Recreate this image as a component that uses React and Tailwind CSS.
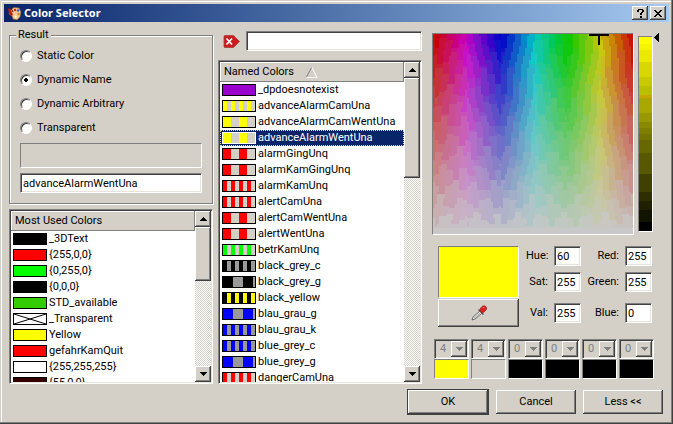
import React, { useState } from 'react';

const GREY = '#d4d0c8';

const mostUsed = [
  { name: '_3DText', colors: ['#000000'] },
  { name: '{255,0,0}', colors: ['#ff0000'] },
  { name: '{0,255,0}', colors: ['#00ff00'] },
  { name: '{0,0,0}', colors: ['#000000'] },
  { name: 'STD_available', colors: ['#33cc00'] },
  { name: '_Transparent', transparent: true, colors: ['#ffffff'] },
  { name: 'Yellow', colors: ['#ffff00'] },
  { name: 'gefahrKamQuit', colors: ['#ff0000'] },
  { name: '{255,255,255}', colors: ['#ffffff'] },
  { name: '{55,0,0}', colors: ['#370000'] }
];

const namedColors = [
  { name: '_dpdoesnotexist', colors: ['#9900cc'] },
  { name: 'advanceAlarmCamUna', colors: ['#ffff00', GREY], stripe: 4 },
  { name: 'advanceAlarmCamWentUna', colors: ['#ffff00', GREY], stripe: 8 },
  { name: 'advanceAlarmWentUna', colors: ['#ffff00', GREY], stripe: 8 },
  { name: 'alarmGingUnq', colors: ['#ff0000', GREY], stripe: 8 },
  { name: 'alarmKamGingUnq', colors: ['#ff0000', GREY], stripe: 8 },
  { name: 'alarmKamUnq', colors: ['#ff0000', GREY], stripe: 4 },
  { name: 'alertCamUna', colors: ['#ff0000', GREY], stripe: 4 },
  { name: 'alertCamWentUna', colors: ['#ff0000', GREY], stripe: 8 },
  { name: 'alertWentUna', colors: ['#ff0000', GREY], stripe: 8 },
  { name: 'betrKamUnq', colors: ['#00ff00', GREY], stripe: 4 },
  { name: 'black_grey_c', colors: ['#000000', '#999999'], stripe: 4 },
  { name: 'black_grey_g', colors: ['#000000', '#999999'], stripe: 10 },
  { name: 'black_yellow', colors: ['#000000', '#ffff00'], stripe: 4 },
  { name: 'blau_grau_g', colors: ['#0000ff', '#999999'], stripe: 10 },
  { name: 'blau_grau_k', colors: ['#0000ff', '#999999'], stripe: 4 },
  { name: 'blue_grey_c', colors: ['#0000ff', '#999999'], stripe: 4 },
  { name: 'blue_grey_g', colors: ['#0000ff', '#999999'], stripe: 10 },
  { name: 'dangerCamUna', colors: ['#ff0000', GREY], stripe: 4 }
];

// [color, share of the bar]
const valueSteps = [
  ['#ffff00', 7], ['#f5f500', 6], ['#eaea00', 12], ['#d8d800', 15], ['#c9c900', 9],
  ['#b9c000', 9], ['#c8a800', 3], ['#a8a800', 15], ['#989800', 9], ['#8a8a00', 6],
  ['#7e7e00', 6], ['#747400', 6], ['#686800', 13], ['#585800', 21], ['#404000', 18],
  ['#2e2e00', 9], ['#202000', 9], ['#101400', 12], ['#000000', 9]
];

const resultTypes = ['Static Color', 'Dynamic Name', 'Dynamic Arbitrary', 'Transparent'];

const combos = [
  { value: '4', swatch: 'bg-[#ffff00]' },
  { value: '4', swatch: 'bg-[#d4d0c8]' },
  { value: '0', swatch: 'bg-black' },
  { value: '0', swatch: 'bg-black' },
  { value: '0', swatch: 'bg-black' },
  { value: '0', swatch: 'bg-black' }
];

const channels = [
  ['Hue', '60'], ['Red', '255'],
  ['Sat', '255'], ['Green', '255'],
  ['Val', '255'], ['Blue', '0']
];

const raised = 'bg-[#d4d0c8] shadow-[inset_-1px_-1px_#404040,inset_1px_1px_#ffffff,inset_-2px_-2px_#808080]';
const sunken = 'border border-t-[#808080] border-l-[#808080] border-b-white border-r-white shadow-[inset_1px_1px_#404040,inset_-1px_-1px_#e8e4dc]';
const etched = 'border border-t-[#808080] border-l-[#808080] border-b-white border-r-white';

// Hue runs right to left, saturation drops towards the bottom, value stays at 200.
// Colors are snapped to bands that narrow towards red, green and blue.
function spectrumColor(x, y) {
  const hue = 6 - (x / 200) * 6;
  const primary = Math.round(hue / 2) * 2;
  const side = hue < primary ? -1 : 1;
  const t = y / 200;
  const wobble = 0.03 * Math.sin(y * 0.11 + primary);
  const band = Math.floor((Math.abs(hue - primary) + t * 0.9 + wobble) / 0.2);
  const shift = ((band * 5 + primary * 3 + side + 7) % 7) / 40;
  const fade = (Math.floor((t + shift) / 0.17) + 0.5) * 0.17 - shift;
  const bleach = Math.max(0, Math.min((fade + t) / 2, 1));
  const snappedBleach = Math.round(bleach / 0.08) * 0.08;
  const f = Math.max(0, Math.min((band + 0.4) * 0.2 - snappedBleach * 0.9, 1));
  const sat = y > 192 ? 0 : 1 - snappedBleach;
  const snapped = primary + side * f + 6;
  const rgb = [5, 3, 1].map((n) => {
    const k = (n + snapped) % 6;
    return Math.round(200 * (1 - sat * Math.max(0, Math.min(k, 4 - k, 1))));
  });
  return `rgb(${rgb.join(',')})`;
}

function spectrumCells() {
  const cells = [];
  for (let x = 0; x < 200; x += 2) {
    let start = 0;
    let last = null;
    for (let y = 0; y <= 200; y += 2) {
      const fill = y === 200 ? null : spectrumColor(x, y);
      if (fill !== last) {
        if (last) cells.push({ x, y: start, h: y - start, fill: last });
        start = y;
        last = fill;
      }
    }
  }
  return cells;
}

const cells = spectrumCells();

function Spectrum() {
  return (
    <svg width="200" height="200" viewBox="0 0 200 200" shapeRendering="crispEdges">
      {cells.map((c) => (
        <rect key={`${c.x}-${c.y}`} x={c.x} y={c.y} width="2" height={c.h} fill={c.fill} />
      ))}
      <path d="M156 0h20v2h-9v9h-2v-9h-9z" fill="#000" />
    </svg>
  );
}

function Swatch({ item, selected }) {
  const [a, b] = item.colors;
  const size = item.stripe;
  const background = b
    ? `repeating-linear-gradient(90deg, ${a} 0 ${size}px, ${b} ${size}px ${size * 2}px)`
    : a;
  return (
    <span className={`block h-3 w-[34px] shrink-0 border ${selected ? 'border-white' : 'border-black'}`}>
      <span className="block h-full" style={{ background }}>
        {item.transparent && (
          <svg width="32" height="10" viewBox="0 0 32 10" className="block">
            <path d="M0 0l32 10M32 0L0 10" stroke="#000" strokeWidth="1" />
          </svg>
        )}
      </span>
    </span>
  );
}

function Arrow({ up, color = '#000' }) {
  return (
    <svg width="7" height="4" viewBox="0 0 7 4" shapeRendering="crispEdges">
      <path d={up ? 'M3 0h1v1h1v1h1v1h1v1H0V3h1V2h1V1h1z' : 'M0 0h7v1H6v1H5v1H4v1H3V3H2V2H1V1H0z'} fill={color} />
    </svg>
  );
}

function ScrollBar({ thumb }) {
  return (
    <div className="flex w-4 shrink-0 flex-col bg-[conic-gradient(#ffffff_25%,#d4d0c8_0_50%,#ffffff_0_75%,#d4d0c8_0)] bg-[length:2px_2px]">
      <button aria-label="Scroll up" className={`flex h-4 shrink-0 items-center justify-center ${raised}`}><Arrow up /></button>
      <div className={`${thumb} shrink-0 ${raised}`} />
      <button aria-label="Scroll down" className={`mt-auto flex h-4 shrink-0 items-center justify-center ${raised}`}><Arrow /></button>
    </div>
  );
}

function ColorList({ title, items, sorted, selected, onSelect, thumb }) {
  return (
    <div className={`flex min-h-0 flex-1 bg-white p-px ${sunken}`}>
      <div className="min-w-0 flex-1 overflow-hidden">
        <table className="w-full table-fixed border-collapse">
          <thead>
            <tr>
              <th className="h-5 bg-[#d4d0c8] p-0 text-left font-normal shadow-[inset_-1px_-1px_#808080,inset_1px_1px_#ffffff]">
                <div className="flex items-center gap-3 pl-1">
                  {title}
                  {sorted && (
                    <svg width="12" height="11" viewBox="0 0 12 11">
                      <path d="M5.500 .5L.5 10" stroke="#808080" fill="none" />
                      <path d="M6 .5L11 10.500H.5" stroke="#fff" fill="none" />
                    </svg>
                  )}
                </div>
              </th>
            </tr>
          </thead>
          <tbody>
            {items.map((item) => {
              const active = item.name === selected;
              return (
                <tr key={item.name} onClick={() => onSelect && onSelect(item.name)}>
                  <td className={`h-4 p-0 ${active ? 'bg-[#0a246a] text-white outline-1 -outline-offset-1 outline-dotted outline-[#f5db95]' : ''}`}>
                    <div className="flex h-4 items-center gap-0.5 pl-0.5 leading-4">
                      <Swatch item={item} selected={active} />
                      <span>{item.name}</span>
                    </div>
                  </td>
                </tr>
              );
            })}
          </tbody>
        </table>
      </div>
      <ScrollBar thumb={thumb} />
    </div>
  );
}

function TitleBar() {
  return (
    <header className="flex h-[18px] shrink-0 items-center bg-linear-to-r from-[#0a246a] to-[#a6caf0] pr-[3px] pl-1">
      <svg width="13" height="13" viewBox="0 0 13 13">
        <path d="M2 3L6 .5l5 .5 2 4-1 5-3 3-4-1-1-3-3-2z" fill="#f0c890" stroke="#8a5a30" strokeWidth=".7" />
        <path d="M0 1l3 2 2 5-2 1-2-3z" fill="#c02018" />
        <path d="M3 1l2 4" stroke="#401008" />
        <circle cx="7" cy="3" r="1.200" fill="#d82018" />
        <circle cx="10" cy="3.500" r="1.200" fill="#3060c8" />
        <circle cx="10.500" cy="7" r="1.200" fill="#c88020" />
        <circle cx="7.500" cy="9.500" r="1.200" fill="#fff4d8" />
      </svg>
      <h1 className="ml-[3px] flex-1 font-['Noto_Sans',sans-serif] text-[11px] leading-4 font-bold text-white">Color Selector</h1>
      <div className="flex gap-0.5">
        <button aria-label="Help" className={`flex h-3.5 w-4 items-center justify-center ${raised}`}>
          <svg width="7" height="9" viewBox="0 0 7 9" shapeRendering="crispEdges">
            <path d="M1 0h5v1H1zM0 1h2v2H0zM5 1h2v2H5zM4 3h2v1H4zM3 4h2v2H3zM3 7h2v2H3z" />
          </svg>
        </button>
        <button aria-label="Close" className={`flex h-3.5 w-4 items-center justify-center ${raised}`}>
          <svg width="8" height="7" viewBox="0 0 8 7" shapeRendering="crispEdges">
            <path d="M0 0h2v1H0zM6 0h2v1H6zM1 1h2v1H1zM5 1h2v1H5zM2 2h4v1H2zM3 3h2v1H3zM2 4h4v1H2zM1 5h2v1H1zM5 5h2v1H5zM0 6h2v1H0zM6 6h2v1H6z" />
          </svg>
        </button>
      </div>
    </header>
  );
}

function ResultGroup({ type, onType, name, onName }) {
  return (
    <fieldset className="border border-[#808080] px-2.5 pb-2.5 shadow-[1px_1px_#ffffff,inset_1px_1px_#ffffff]">
      <legend className="-ml-1 bg-[#d4d0c8] px-0.5 leading-[14px]">Result</legend>
      <div className="flex flex-col pt-0.5">
        {resultTypes.map((label) => (
          <label key={label} className="flex h-6 items-center gap-[5px]">
            <input
              type="radio"
              name="result"
              checked={type === label}
              onChange={() => onType(label)}
              className="size-3 appearance-none rounded-full border border-t-[#808080] border-r-white border-b-white border-l-[#808080] bg-white shadow-[inset_1px_1px_#404040] checked:bg-[radial-gradient(circle,#000_2px,#fff_2px)]"
            />
            {label}
          </label>
        ))}
      </div>
      <div className={`mt-[3px] h-[25px] ${etched}`} />
      <input
        aria-label="Color name"
        value={name}
        onChange={(e) => onName(e.target.value)}
        className={`mt-[5px] block h-5 w-full bg-white px-0.5 ${sunken}`}
      />
    </fieldset>
  );
}

function ColorPanel() {
  return (
    <section className="flex shrink-0 flex-col pt-[11px]">
      <div className="flex gap-1">
        <div className={`h-[202px] w-[202px] ${etched}`}><Spectrum /></div>
        <div className="flex gap-px">
          <div className={`mt-[3px] flex h-[196px] w-[15px] flex-col ${etched}`}>
            {valueSteps.map(([color, size]) => (
              <div key={color} style={{ background: color, flexGrow: size }} />
            ))}
          </div>
          <svg width="5" height="9" viewBox="0 0 5 9" shapeRendering="crispEdges">
            <path d="M4 0h1v9H4V8H3V7H2V6H1V5H0V4h1V3h1V2h1V1h1z" />
          </svg>
        </div>
      </div>

      <div className="mt-[11px] flex gap-[7px] pl-1.5">
        <div className="flex w-[81px] flex-col gap-px">
          <div className={`h-[52px] bg-[#ffff00] ${etched}`} />
          <button aria-label="Pick color" className={`flex h-7 items-center justify-center ${raised}`}>
            <svg width="16" height="16" viewBox="0 0 16 16">
              <path d="M1 15l1-3 7-6 2 2-7 6z" fill="#f4f4f4" stroke="#666" strokeWidth="1" />
              <path d="M3 13l6-5" stroke="#aaa" />
              <path d="M7.500 4.500l5 5" stroke="#555" strokeWidth="1.500" />
              <path d="M9 5c0-2 3-5 5-4s2 3 1 4-3 3-4 3z" fill="#e02020" stroke="#901010" strokeWidth=".6" />
              <path d="M12 3l1.500-1" stroke="#ff9090" />
            </svg>
          </button>
        </div>
        <div className="grid grid-cols-[28px_27px_44px_27px] grid-rows-[26px_31px_20px] items-start">
          {channels.map(([label, value]) => (
            <React.Fragment key={label}>
              <label htmlFor={label} className="pr-1.5 text-right leading-5">{label}:</label>
              <input id={label} defaultValue={value} className={`h-5 w-[27px] bg-white px-0.5 ${sunken}`} />
            </React.Fragment>
          ))}
        </div>
      </div>

      <div className="mt-3 flex gap-0.5 pl-0.5">
        {combos.map((c, i) => (
          <div key={i} className="flex w-[35px] flex-col">
            <div className={`flex h-5 p-px ${sunken}`}>
              <select disabled aria-label={`Pattern width ${i + 1}`} className="min-w-0 flex-1 appearance-none pl-1 text-[#808080] opacity-100">
                <option>{c.value}</option>
              </select>
              <span className={`flex w-4 items-center justify-center ${raised}`}><Arrow color="#808080" /></span>
            </div>
            <div className={`h-5 ${c.swatch} ${etched}`} />
          </div>
        ))}
      </div>
    </section>
  );
}

export default function App() {
  const [type, setType] = useState('Dynamic Name');
  const [name, setName] = useState('advanceAlarmWentUna');
  const [filter, setFilter] = useState('');
  const visible = namedColors.filter((c) => c.name.toLowerCase().includes(filter.toLowerCase()));

  return (
    <div className="flex h-screen flex-col bg-[#d4d0c8] p-1 font-['Roboto',sans-serif] text-[11px] leading-4 text-black shadow-[inset_-1px_-1px_#404040,inset_-2px_-2px_#808080,inset_1px_1px_#d4d0c8,inset_2px_2px_#ffffff]">
      <TitleBar />

      <main className="flex min-h-0 flex-1 pr-2.5 pl-[5px]">
        <div className="flex min-w-0 flex-1 flex-col gap-[5px] pt-1.5">
          <ResultGroup type={type} onType={setType} name={name} onName={setName} />
          <ColorList title="Most Used Colors" items={mostUsed} onSelect={setName} thumb="h-[54px]" />
        </div>

        <div className="ml-[5px] flex min-w-0 flex-1 flex-col gap-[9px] pt-[9px]">
          <div className="flex items-center gap-1.5 pl-[5px]">
            <button aria-label="Clear filter" onClick={() => setFilter('')}>
              <svg width="17" height="13" viewBox="0 0 17 13" className="block">
                <path d="M1 1.500Q1 .5 2 .5h8.500L16.500 6.500l-6 6H2q-1 0-1-1z" fill="#cc1c20" stroke="#a04040" strokeWidth=".8" />
                <path d="M3.500 3.500l5.500 6M9 3.500l-5.500 6" stroke="#fff" strokeWidth="1.800" />
              </svg>
            </button>
            <input
              aria-label="Filter named colors"
              value={filter}
              onChange={(e) => setFilter(e.target.value)}
              className={`h-5 min-w-0 flex-1 bg-white px-0.5 ${sunken}`}
            />
          </div>
          <ColorList title="Named Colors" items={visible} sorted selected={name} onSelect={setName} thumb="h-[100px]" />
        </div>

        <div className="ml-2.5">
          <ColorPanel />
        </div>
      </main>

      <footer className="flex items-center justify-end gap-[7px] pt-[5px] pr-1.5 pb-[5px]">
        <button className="border border-[#404040]">
          <span className={`flex h-6 w-20 items-center justify-center ${raised}`}>OK</span>
        </button>
        <button className={`h-6 w-20 ${raised}`}>Cancel</button>
        <button className={`h-6 w-20 ${raised}`}>Less &lt;&lt;</button>
      </footer>
    </div>
  );
}
